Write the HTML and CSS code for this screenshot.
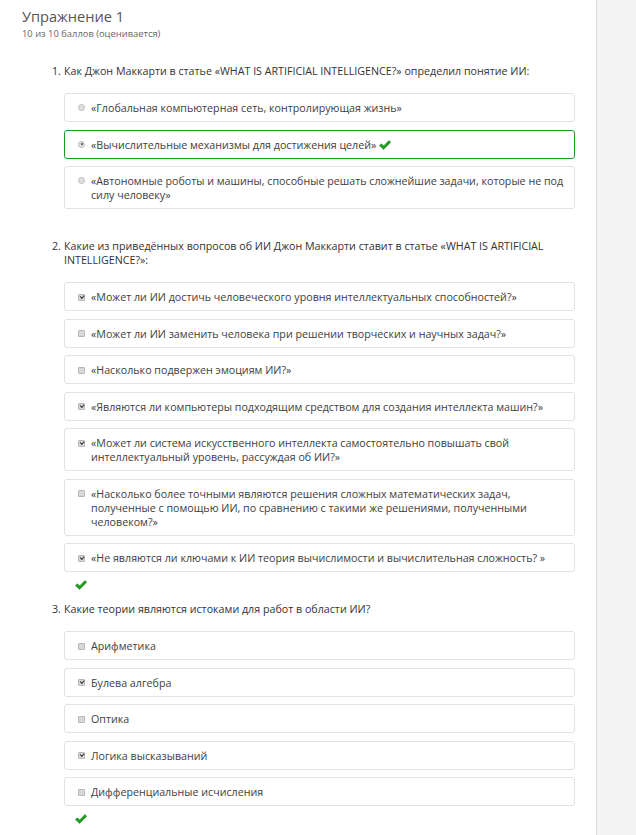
FILE: index.html
```html
<!DOCTYPE html>
<html lang="ru">
<head>
<meta charset="utf-8">
<title>Упражнение 1</title>
<link rel="stylesheet" href="styles.css">
</head>
<body>
<div class="page">
  <main class="main">
    <h1 class="title">Упражнение 1</h1>
    <div class="score">10 из 10 баллов (оценивается)</div>

    <section class="question">
      <div class="qhead"><span class="qnum">1.</span><span class="qtext">Как Джон Маккарти в статье «WHAT IS ARTIFICIAL INTELLIGENCE?» определил понятие ИИ:</span></div>
      <ul class="options">
        <li class="option"><span class="radio"></span><span class="otext">«Глобальная компьютерная сеть, контролирующая жизнь»</span></li>
        <li class="option correct"><span class="radio checked"></span><span class="otext">«Вычислительные механизмы для достижения целей» <svg class="tick" viewBox="0 0 12 10" width="12" height="10"><path d="M0.3 5.6 L2.4 3.7 L4.6 5.9 L9.9 0.4 L11.8 2.3 L4.6 9.6 Z"/></svg></span></li>
        <li class="option"><span class="radio"></span><span class="otext">«Автономные роботы и машины, способные решать сложнейшие задачи, которые не под силу человеку»</span></li>
      </ul>
      <div class="qfoot"></div>
    </section>

    <section class="question">
      <div class="qhead"><span class="qnum">2.</span><span class="qtext">Какие из приведённых вопросов об ИИ Джон Маккарти ставит в статье «WHAT IS ARTIFICIAL INTELLIGENCE?»:</span></div>
      <ul class="options">
        <li class="option"><span class="box checked"></span><span class="otext">«Может ли ИИ достичь человеческого уровня интеллектуальных способностей?»</span></li>
        <li class="option"><span class="box"></span><span class="otext">«Может ли ИИ заменить человека при решении творческих и научных задач?»</span></li>
        <li class="option"><span class="box"></span><span class="otext">«Насколько подвержен эмоциям ИИ?»</span></li>
        <li class="option"><span class="box checked"></span><span class="otext">«Являются ли компьютеры подходящим средством для создания интеллекта машин?»</span></li>
        <li class="option"><span class="box checked"></span><span class="otext">«Может ли система искусственного интеллекта самостоятельно повышать свой интеллектуальный уровень, рассуждая об ИИ?»</span></li>
        <li class="option"><span class="box"></span><span class="otext">«Насколько более точными являются решения сложных математических задач, полученные с помощью ИИ, по сравнению с такими же решениями, полученными человеком?»</span></li>
        <li class="option"><span class="box checked"></span><span class="otext">«Не являются ли ключами к ИИ теория вычислимости и вычислительная сложность? »</span></li>
      </ul>
      <div class="qfoot"><svg class="tick" viewBox="0 0 12 10" width="12" height="10"><path d="M0.3 5.6 L2.4 3.7 L4.6 5.9 L9.9 0.4 L11.8 2.3 L4.6 9.6 Z"/></svg></div>
    </section>

    <section class="question">
      <div class="qhead"><span class="qnum">3.</span><span class="qtext">Какие теории являются истоками для работ в области ИИ?</span></div>
      <ul class="options">
        <li class="option"><span class="box"></span><span class="otext">Арифметика</span></li>
        <li class="option"><span class="box checked"></span><span class="otext">Булева алгебра</span></li>
        <li class="option"><span class="box"></span><span class="otext">Оптика</span></li>
        <li class="option"><span class="box checked"></span><span class="otext">Логика высказываний</span></li>
        <li class="option"><span class="box"></span><span class="otext">Дифференциальные исчисления</span></li>
      </ul>
      <div class="qfoot"><svg class="tick" viewBox="0 0 12 10" width="12" height="10"><path d="M0.3 5.6 L2.4 3.7 L4.6 5.9 L9.9 0.4 L11.8 2.3 L4.6 9.6 Z"/></svg></div>
    </section>
  </main>
  <aside class="side"></aside>
</div>
</body>
</html>
```

FILE: styles.css
```css
html, body {
  margin: 0;
  padding: 0;
  background: #ffffff;
}

body {
  font-family: "Open Sans", "Liberation Sans", Arial, sans-serif;
  color: #333333;
}

.page {
  display: flex;
  min-height: 835px;
}

.main {
  width: 597px;
  flex: none;
  padding: 6px 0 0 22px;
  box-sizing: border-box;
  border-right: 1px solid #dcdcdc;
}

.side {
  flex: 1;
  background: #f4f4f4;
}

.title {
  margin: 0;
  font-size: 14.6px;
  line-height: 20px;
  font-weight: 400;
  color: #555555;
}

.score {
  margin-top: 2px;
  font-size: 9.4px;
  line-height: 12px;
  color: #666666;
}

.question {
  padding-left: 42px;
  padding-right: 21px;
}

.score + .question {
  margin-top: 24px;
}

.qhead {
  display: flex;
  font-size: 10.7px;
  line-height: 14px;
  color: #333333;
}

.qnum {
  flex: none;
  width: 12px;
  margin-left: -12px;
}

.options {
  list-style: none;
  margin: 15px 0 0 0;
  padding: 0;
  display: flex;
  flex-direction: column;
  gap: 7.5px;
}

.option {
  display: flex;
  align-items: flex-start;
  gap: 6px;
  padding: 7px 9px 6px 13px;
  border: 1px solid #e2e2e2;
  border-radius: 3px;
  font-size: 10.7px;
  line-height: 14px;
  color: #3e3e3e;
}

.option.correct {
  border-color: #1f9c20;
}

.radio {
  flex: none;
  width: 7px;
  height: 7px;
  margin-top: 3px;
  box-sizing: border-box;
  border-radius: 50%;
  border: 1px solid #bdbdbd;
  background: #dedede;
  position: relative;
}

.radio.checked::after {
  content: "";
  position: absolute;
  left: 1.5px;
  top: 1.5px;
  width: 2px;
  height: 2px;
  border-radius: 50%;
  background: #444444;
}

.box {
  flex: none;
  width: 7px;
  height: 7px;
  margin-top: 3.5px;
  box-sizing: border-box;
  border: 1px solid #b8b8b8;
  border-radius: 1px;
  background: #d8d8d8;
  position: relative;
}

.box.checked::after {
  content: "";
  position: absolute;
  left: 1px;
  top: 0;
  width: 3px;
  height: 1.5px;
  border-left: 1.2px solid #333333;
  border-bottom: 1.2px solid #333333;
  transform: rotate(-45deg);
}

.otext {
  flex: 1;
}

.tick {
  display: inline-block;
  vertical-align: -1px;
}

.tick path {
  fill: #1f9c20;
  stroke: #157a16;
  stroke-width: 0.4;
}

.qfoot {
  height: 30px;
  box-sizing: border-box;
  padding: 8px 0 0 11px;
}

.qfoot .tick {
  display: block;
}
```
